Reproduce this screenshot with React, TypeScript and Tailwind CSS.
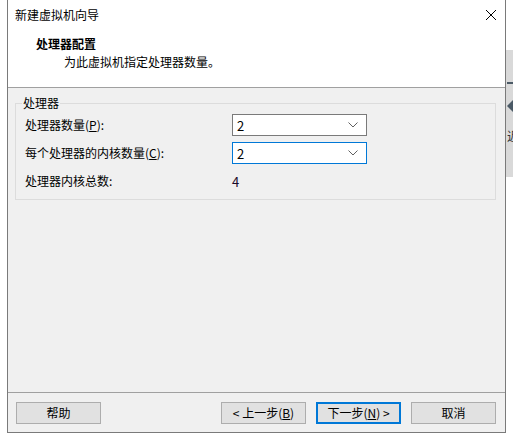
import React from "react";

const font = {
  fontFamily: '"Noto Sans CJK SC", "Microsoft YaHei", sans-serif',
};

function Chevron() {
  return (
    <svg width="10" height="6" viewBox="0 0 10 6" className="text-[#606060]">
      <path d="M0.5 0.5 L5 5 L9.5 0.5" fill="none" stroke="currentColor" strokeWidth="1" />
    </svg>
  );
}

function Combo({ value, focused }: { value: string; focused?: boolean }) {
  return (
    <div
      className={
        focused
          ? "flex h-[22px] w-[135px] items-center justify-between border border-[#0078d7] bg-white pl-[4px] pr-[8px]"
          : "flex h-[22px] w-[135px] items-center justify-between border border-[#7a7a7a] bg-white pl-[4px] pr-[8px]"
      }
    >
      <span className="text-[13px] leading-none text-black">{value}</span>
      <Chevron />
    </div>
  );
}

function Btn({ children, primary }: { children: React.ReactNode; primary?: boolean }) {
  return (
    <button
      className={
        primary
          ? "flex h-[22px] w-[85px] items-center justify-center border-2 border-[#0078d7] bg-[#e1e1e1] text-[12px] leading-none text-black"
          : "flex h-[22px] w-[85px] items-center justify-center border border-[#adadad] bg-[#e1e1e1] text-[12px] leading-none text-black"
      }
    >
      {children}
    </button>
  );
}

export default function App() {
  return (
    <div className="relative h-[440px] w-[513px] overflow-hidden bg-white" style={font}>
      {/* app behind the dialog */}
      <div className="absolute left-[506px] top-[50px] h-[127px] w-[7px] overflow-hidden bg-[#d9d9d9]">
        <div className="absolute left-[1px] top-[32px] h-[2px] w-[6px] bg-[#4b5a66]" />
        <div className="absolute left-[1px] top-[50px] h-0 w-0 border-y-[6px] border-r-[6px] border-y-transparent border-r-[#4b5a66]" />
        <span className="absolute left-[1px] top-[80px] text-[12px] leading-none text-[#333]">近</span>
      </div>

      <div className="ml-[7px] flex h-[433px] w-[499px] flex-col border-x border-b border-[#7a7a7a] bg-[#f0f0f0]">
        {/* title + header */}
        <div className="h-[88px] border-b border-[#a0a0a0] bg-white">
          <div className="flex h-[30px] items-center justify-between pl-[7px] pr-[8px]">
            <span className="text-[12px] leading-none text-black">新建虚拟机向导</span>
            <svg width="12" height="12" viewBox="0 0 12 12">
              <path d="M1 1 L11 11 M11 1 L1 11" stroke="#000" strokeWidth="1" />
            </svg>
          </div>
          <div className="pl-[28px] pt-[8px] text-[12px] font-bold leading-none text-black">处理器配置</div>
          <div className="pl-[56px] pt-[6px] text-[12px] leading-none text-black">为此虚拟机指定处理器数量。</div>
        </div>

        {/* body */}
        <div className="flex-1 px-[7px] pt-[15px]">
          <div className="relative h-[97px] w-[481px] border border-[#dcdcdc]">
            <span className="absolute left-[6px] top-[-9px] bg-[#f0f0f0] px-[1px] text-[12px] leading-[16px] text-black">
              处理器
            </span>
            <div className="flex flex-col pl-[9px] pt-[10px]">
              <div className="flex h-[22px] items-center">
                <span className="w-[207px] text-[12px] leading-none text-black">
                  处理器数量(<span className="underline">P</span>):
                </span>
                <Combo value="2" />
              </div>
              <div className="mt-[6px] flex h-[22px] items-center">
                <span className="w-[207px] text-[12px] leading-none text-black">
                  每个处理器的内核数量(<span className="underline">C</span>):
                </span>
                <Combo value="2" focused />
              </div>
              <div className="mt-[6px] flex h-[22px] items-center">
                <span className="w-[207px] text-[12px] leading-none text-black">处理器内核总数:</span>
                <span className="text-[13px] leading-none text-[#1a0a2a]">4</span>
              </div>
            </div>
          </div>
        </div>

        {/* footer */}
        <div className="h-[40px] border-t border-[#a0a0a0] px-[8px] pt-[9px]">
          <div className="flex items-start">
            <Btn>帮助</Btn>
            <div className="ml-auto flex gap-[10px] pr-[1px]">
              <Btn>
                &lt; 上一步(<span className="underline">B</span>)
              </Btn>
              <Btn primary>
                下一步(<span className="underline">N</span>) &gt;
              </Btn>
              <Btn>取消</Btn>
            </div>
          </div>
        </div>
      </div>
    </div>
  );
}
